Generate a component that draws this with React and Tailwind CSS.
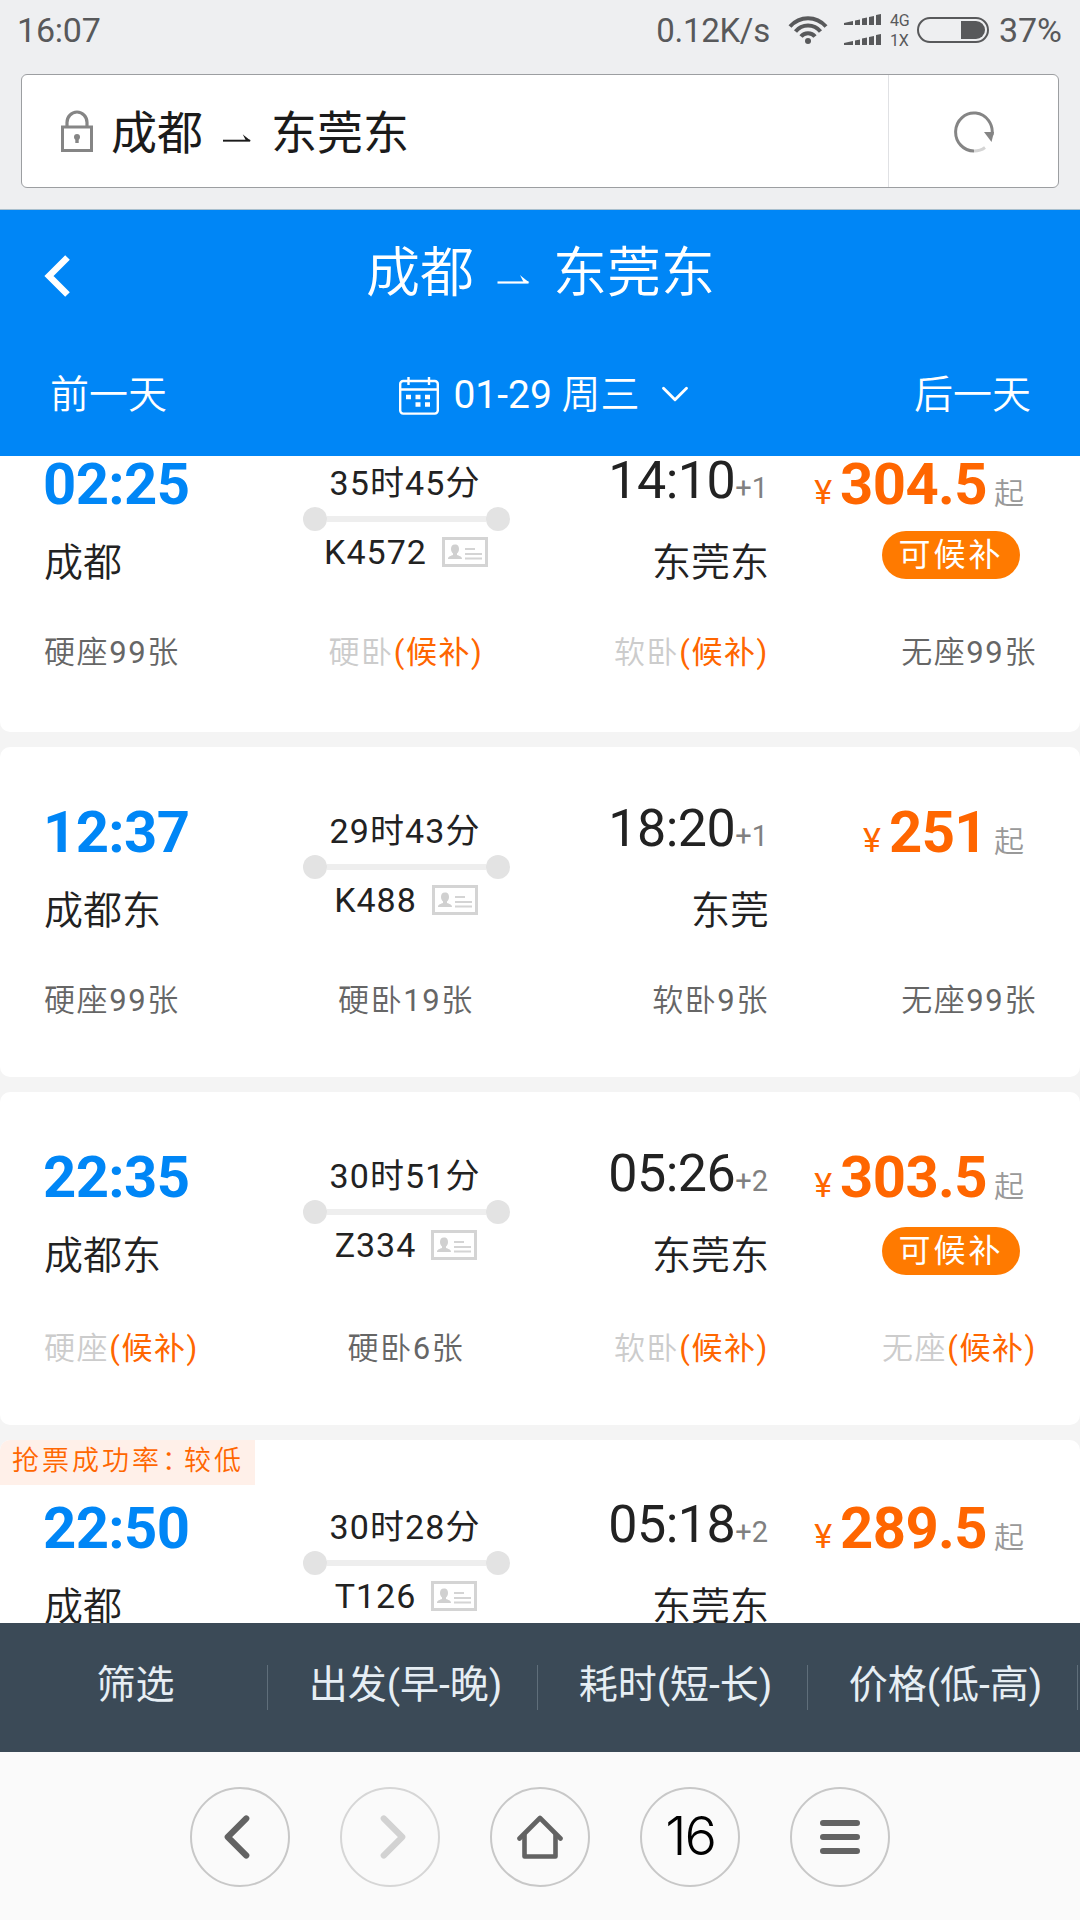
import { ChevronDown, ChevronLeft, ChevronRight } from "lucide-react";

const trains = [
  {
    depart: "02:25", from: "成都", duration: "35时45分", code: "K4572", arrive: "14:10", plus: "+1", to: "东莞东", price: "304.5", backup: true,
    seats: [["硬座", "99"], ["硬卧", null], ["软卧", null], ["无座", "99"]],
    box: "h-[333px] pt-[54px] -mt-[57px]", body: "h-[180px]", badge: "mt-[18px]",
  },
  {
    depart: "12:37", from: "成都东", duration: "29时43分", code: "K488", arrive: "18:20", plus: "+1", to: "东莞", price: "251", backup: false,
    seats: [["硬座", "99"], ["硬卧", "19"], ["软卧", "9"], ["无座", "99"]],
    box: "h-[330px] pt-[54px]", body: "h-[180px]",
  },
  {
    depart: "22:35", from: "成都东", duration: "30时51分", code: "Z334", arrive: "05:26", plus: "+2", to: "东莞东", price: "303.5", backup: true,
    seats: [["硬座", null], ["硬卧", "6"], ["软卧", null], ["无座", null]],
    box: "h-[333px] pt-[54px]", body: "h-[183px]", badge: "mt-[21px]",
  },
  {
    depart: "22:50", from: "成都", duration: "30时28分", code: "T126", arrive: "05:18", plus: "+2", to: "东莞东", price: "289.5", backup: false,
    tag: "抢票成功率", tagValue: "较低",
    seats: [],
    box: "h-[333px]", body: "h-[180px]",
  },
];

const sorts = ["筛选", "出发(早-晚)", "耗时(短-长)", "价格(低-高)"];

// 半箭头 ⇀
function Harpoon({ className }) {
  return (
    <svg viewBox="0 0 32 10" className={className} fill="none" stroke="currentColor">
      <path d="M0 7.5H31" strokeWidth="2.2" />
      <path d="M22.5 0C25 2 28 5 32 7.5L26 7L22.5 0Z" fill="currentColor" stroke="none" />
    </svg>
  );
}

function StatusBar() {
  return (
    <div className="h-[61px] flex items-center justify-between pl-[17px] pr-[18px] text-[#58595b]">
      <span className="text-[34px] leading-[59px] tracking-[-0.2px]">16:07</span>
      <div className="flex items-center">
        <span className="text-[33px] leading-[60px] mr-[18px] tracking-[-0.3px]">0.12K/s</span>
        <svg width="40" height="30" viewBox="0 0 40 30" fill="none" stroke="currentColor" strokeWidth="4" className="mr-[16px] -mt-[2px]">
          <path d="M2 11.5C12 .5 28 .5 38 11.5" />
          <path d="M7.5 16.5C14 8.5 26 8.5 32.5 16.5" />
          <path d="M13 21.5C16.5 17 23.5 17 27 21.5" />
          <circle cx="20" cy="26" r="3" fill="currentColor" stroke="none" />
        </svg>
        <div className="flex flex-col gap-[9px] mr-[9px] -mt-[2px]">
          <SignalBars />
          <SignalBars />
        </div>
        <div className="flex flex-col text-[16px] leading-[20px] mr-[5px] w-[22px]">
          <span>4G</span>
          <span>1X</span>
        </div>
        <div className="w-[72px] h-[26px] rounded-full border-2 border-[#58595b] p-[2px] flex justify-end mr-[10px] -mt-[2px]">
          <div className="w-[24px] h-full bg-[#58595b] rounded-r-full" />
        </div>
        <span className="text-[34px] leading-[59px]">37%</span>
      </div>
    </div>
  );
}

function SignalBars() {
  return (
    <svg width="37" height="11" viewBox="0 0 37 11" fill="currentColor">
      <path d="M0 9L9 7V11H0ZM11 6.5L16 5.5V11H11ZM18 4.5L23 3.5V11H18ZM25 3L30 2V11H25ZM32 1L37 0V11H32Z" />
    </svg>
  );
}

function AddressBar() {
  return (
    <div className="mx-[21px] mt-[13px] h-[114px] flex bg-white border border-[#9c9ea1] rounded-[6px]">
      <div className="flex-1 flex items-center pl-[39px] text-[46px] text-[#1b1b1b]">
        <svg width="32" height="42" viewBox="0 0 32 42" fill="none" stroke="#858585" className="mr-[18px]">
          <path d="M6 16V12.5a10 10.5 0 0 1 20 0V16" strokeWidth="3.2" />
          <rect x="1.5" y="17" width="29" height="23.5" strokeWidth="3" />
          <circle cx="16" cy="27" r="3" fill="#858585" stroke="none" />
          <path d="M16 27v6" strokeWidth="3.4" />
        </svg>
        <span className="leading-[60px] pt-[4px]">成都</span>
        <Harpoon className="w-[28px] h-[9px] ml-[20px] mr-[20px] mt-[14px]" />
        <span className="leading-[60px] pt-[4px]">东莞东</span>
      </div>
      <div className="w-[170px] border-l border-[#e0e1e4] flex items-center justify-center">
        <svg width="40" height="42" viewBox="0 0 40 42" fill="none" stroke="#858585" className="mt-[2px]">
          <path d="M38 24A18.3 19 0 1 0 20 40" strokeWidth="3" />
          <path d="M20 40C24 40 28 38.8 31 36.5" strokeWidth="3" stroke="#d4d4d4" />
          <path d="M30 21H40L37.5 31Z" fill="#858585" stroke="none" />
        </svg>
      </div>
    </div>
  );
}

function Header() {
  return (
    <div className="h-[247px] bg-[#0086f6] border-t border-[#a9bfcd] text-white flex flex-col">
      <div className="h-[126px] flex items-center px-[44px]">
        <svg width="26" height="42" viewBox="0 0 26 42" fill="none" stroke="currentColor" strokeWidth="6.5" className="mt-[6px]">
          <path d="M23.5 2.5L5 21L23.5 39.5" />
        </svg>
        <div className="flex-1 flex items-center justify-center pr-[25px] text-[54px] leading-[60px]">
          <span className="pt-[2px] font-[350]">成都</span>
          <Harpoon className="w-[33px] h-[10px] ml-[23px] mr-[23px] mt-[14px]" />
          <span className="pt-[2px] font-[350]">东莞东</span>
        </div>
      </div>
      <div className="flex-1 flex items-center justify-between pl-[50px] pr-[49px] pb-[3px] text-[39px] leading-[60px]">
        <span className="font-[350]">前一天</span>
        <div className="flex items-center pl-[16px]">
          <svg width="40" height="38" viewBox="0 0 40 38" fill="none" stroke="currentColor" strokeWidth="2.4" className="mr-[14px] mt-[3px]">
            <rect x="1.2" y="4" width="37.6" height="32.6" rx="3" />
            <path d="M1 12.5H39M9.5 0V8M30 0V8" />
            <path d="M7 20h5M16.5 20h5M26 20h5M16.5 27.5h5M26 27.5h5" strokeWidth="4.6" />
          </svg>
          <span>01-29 <span className="font-[350]">周三</span></span>
          <ChevronDown className="w-[46px] h-[46px] ml-[12px] -mt-[2px]" strokeWidth={1.5} />
        </div>
        <span className="font-[350]">后一天</span>
      </div>
    </div>
  );
}

function IdCard() {
  return (
    <svg width="46" height="30" viewBox="0 0 46 30" fill="none" stroke="#d4d4d4">
      <rect x="1.5" y="1.5" width="43" height="27" strokeWidth="3" />
      <path d="M13 7.5c3 0 4 2 4 4.500s-1 3.500-2 4.500v1.500c2 .8 5 1.200 5 4H6c0-2.800 3-3.200 5-4V16.500c-1-1-2-2-2-4.500s1-4.500 4-4.500Z" fill="#d0d0d0" stroke="none" />
      <path d="M23 12h10M23 17h17M23 21.5h17" strokeWidth="2" />
    </svg>
  );
}

function Seat({ name, left }) {
  if (left) {
    return (
      <span className="text-[#666] font-[350]">
        {name}<span className="font-normal">{left}</span>张
      </span>
    );
  }
  return (
    <span className="text-[#ccc]">
      <span className="font-[350]">{name}</span>
      <span className="text-[#ff6600]">(候补)</span>
    </span>
  );
}

function TrainCard({ train }) {
  return (
    <div className={`shrink-0 bg-white rounded-[10px] overflow-hidden text-[#222] ${train.box}`}>
      {train.tag && (
        <div className="w-[255px] h-[45px] mb-[12px] pl-[12px] bg-[#fff0e9] text-[#ff6600] text-[27px] leading-[42px] tracking-[3px] font-[350]">
          {train.tag}<span className="tracking-[-5px]">：</span>{train.tagValue}
        </div>
      )}
      <div className={`flex px-[43px] ${train.body}`}>
        <div className="w-[221px] flex flex-col">
          <span className="text-[58px] leading-[62px] tracking-[-0.6px] font-bold text-[#0086f6]">{train.depart}</span>
          <span className="mt-[28px] ml-px text-[39px] leading-[40px] font-[350]">{train.from}</span>
        </div>
        <div className="w-[284px] flex flex-col items-center pt-[12px]">
          <span className="text-[34px] leading-[36px] tracking-[1.1px] -ml-[2px]">{train.duration}</span>
          <div className="mt-[6px] w-[207px] h-[24px] flex items-center">
            <i className="w-[24px] h-[24px] rounded-full bg-[#e3e3e3]" />
            <i className="flex-1 h-[6px] bg-[#eee]" />
            <i className="w-[24px] h-[24px] rounded-full bg-[#e3e3e3]" />
          </div>
          <div className="mt-[3px] flex items-center gap-[15px] text-[34px] leading-[36px] tracking-[1px]">
            {train.code}
            <IdCard />
          </div>
        </div>
        <div className="w-[221px] flex flex-col items-end">
          <div className="h-[54px] text-[52px] leading-[56px] tracking-[-0.5px] pr-px">
            {train.arrive}
            <span className="text-[29px] leading-none tracking-normal text-[#808080]">{train.plus}</span>
          </div>
          <span className="mt-[36px] text-[39px] leading-[40px] font-[350]">{train.to}</span>
        </div>
        <div className="flex-1 flex flex-col items-end pr-[13px]">
          <div className="h-[60px] text-[58px] leading-[62px] text-[#ff6600] whitespace-nowrap">
            <span className="text-[34px] leading-none mr-[8px]">¥</span>
            <b className="tracking-[-0.6px]">{train.price}</b>
            <span className="text-[30px] leading-none text-[#999] font-[350] ml-[7px]">起</span>
          </div>
          {train.backup && (
            <span className={`mr-[4px] w-[138px] h-[48px] shrink-0 rounded-full bg-[#ff7a00] text-white text-center text-[32px] leading-[49px] tracking-[3px] ${train.badge}`}>可候补</span>
          )}
        </div>
      </div>
      <div className="h-[40px] flex px-[43px] text-[31px] leading-[40px] tracking-[1.6px]">
        {train.seats.map(([name, left], i) => (
          <div key={name} className={["w-[221px] pl-px", "w-[284px] text-center", "w-[221px] text-right", "flex-1 text-right"][i]}>
            <Seat name={name} left={left} />
          </div>
        ))}
      </div>
    </div>
  );
}

function NavButton({ children, dim }) {
  return (
    <div className={`w-[100px] h-[100px] rounded-full border-2 flex items-center justify-center ${dim ? "border-[#d6d6d6] text-[#d2d2d2]" : "border-[#c8c8c8] text-[#636363]"}`}>
      {children}
    </div>
  );
}

export default function App() {
  return (
    <div className="w-[1080px] h-[1920px] flex flex-col overflow-hidden bg-[#eeeff1] font-['Roboto','Noto_Sans_CJK_SC',sans-serif]">
      <div className="h-[209px]">
        <StatusBar />
        <AddressBar />
      </div>
      <Header />

      {/* 车次列表 */}
      <div className="h-[1167px] shrink-0 bg-[#f4f4f4] overflow-hidden flex flex-col gap-[15px]">
        {trains.map((train) => (
          <TrainCard key={train.code} train={train} />
        ))}
      </div>

      {/* 排序栏 */}
      <div className="h-[129px] shrink-0 bg-[#3b4a57] flex items-center text-[#e6eef4] text-[39px]">
        {sorts.map((sort) => (
          <div key={sort} className="w-[270px] h-[45px] flex">
            <span className="flex-1 leading-[41px] text-center pl-[4px]">{sort}</span>
            <i className="w-px h-full bg-[#5f6e7a] mr-[2px]" />
          </div>
        ))}
      </div>

      {/* 浏览器底部导航 */}
      <div className="flex-1 bg-[#fafafa] flex items-center justify-center gap-[50px] pt-[2px]">
        <NavButton>
          <ChevronLeft className="w-[74px] h-[74px] -ml-[6px]" strokeWidth={2} />
        </NavButton>
        <NavButton dim>
          <ChevronRight className="w-[74px] h-[74px] ml-[6px]" strokeWidth={2} />
        </NavButton>
        <NavButton>
          <svg width="46" height="44" viewBox="0 0 46 44" fill="none" stroke="currentColor" strokeWidth="4.6" strokeLinecap="round" strokeLinejoin="round">
            <path d="M2.5 23.5L23 3L43.5 23.5" />
            <path d="M7.5 20V41.5H38.5V20" />
          </svg>
        </NavButton>
        <NavButton>
          <span className="font-['Inter'] font-[350] text-[54px] leading-none text-black tracking-[-2px] -mt-[2px]">16</span>
        </NavButton>
        <NavButton>
          <svg width="40" height="36" viewBox="0 0 40 36" stroke="currentColor" strokeWidth="6" strokeLinecap="round">
            <path d="M3 4H37M3 18H37M3 32H37" />
          </svg>
        </NavButton>
      </div>
    </div>
  );
}
